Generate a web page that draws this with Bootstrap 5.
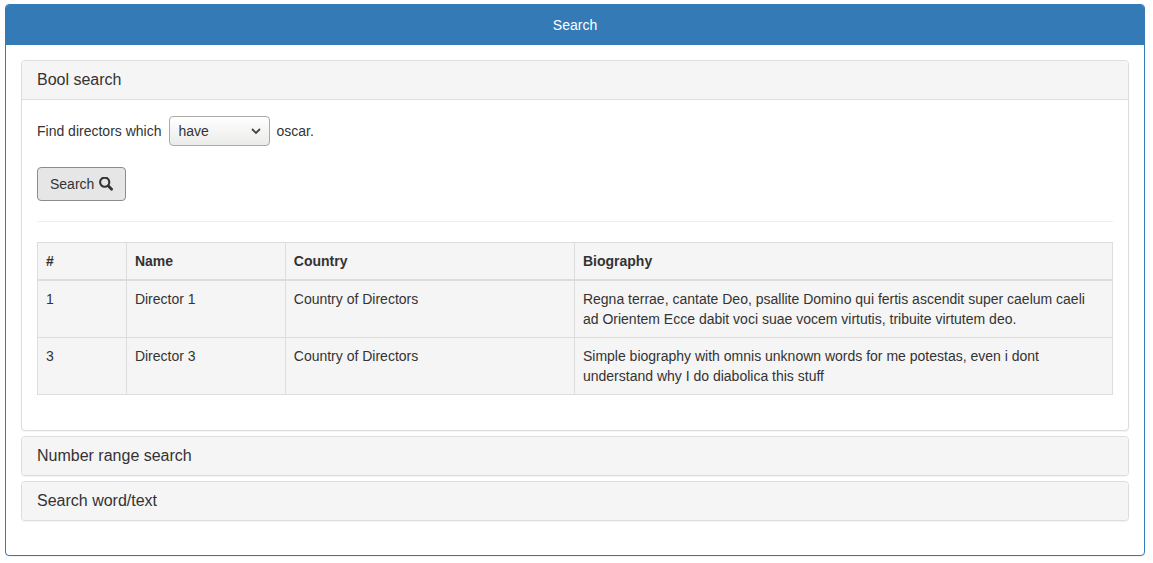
<!DOCTYPE html>
<html lang="en">
<head>
<meta charset="utf-8">
<meta name="viewport" content="width=device-width, initial-scale=1">
<title>Search</title>
<link rel="stylesheet" href="https://cdn.jsdelivr.net/npm/bootstrap@5.3.0/dist/css/bootstrap.min.css">
<style>
  body {
    font-family: "Liberation Sans", Arial, sans-serif;
    font-size: 14px;
    line-height: 20px;
    color: #333;
    background: #fff;
    padding: 4px 8px 4px 5px;
  }
  .search-panel { border-color: #337ab7; border-radius: 4px; box-shadow: 0 1px 1px rgba(0,0,0,.05); color: inherit; }
  .search-panel > .card-header { background: #337ab7; border: 0; color: #fff; padding: 10px 15px; border-radius: 3px 3px 0 0; }
  .search-panel > .card-body { padding: 15px 15px 34px; }
  .search-groups { display: grid; gap: 5px; }
  .search-groups .card { border-color: #ddd; border-radius: 4px; box-shadow: 0 1px 1px rgba(0,0,0,.05); color: inherit; min-width: 0; overflow: hidden; }
  .search-groups .card-header { background: #f5f5f5; border: 0; padding: 10px 15px; }
  .search-groups .card-body { border-top: 1px solid #ddd; padding: 16px 15px 35px; }
  .group-title { font-size: 16px; line-height: 18px; font-weight: 400; }
  .query-line { gap: 5px 7px; margin-bottom: 21px; }
  .choice {
    width: 101px; height: 30px; padding: 0 28px 0 9px;
    font-size: 14px; line-height: 20px; color: #333;
    border: 1px solid #aaa; border-radius: 4px;
    background-color: #f7f7f6;
    background-image: url("data:image/svg+xml,%3Csvg xmlns='http://www.w3.org/2000/svg' viewBox='0 0 10 8'%3E%3Cpath d='M1 2l4 4 4-4' fill='none' stroke='%23444' stroke-width='1.8'/%3E%3C/svg%3E"), linear-gradient(#fff, #ebebea);
    background-repeat: no-repeat;
    background-position: right 8px center, 0 0;
    background-size: 10px 8px, 100% 100%;
  }
  .btn-search { gap: 5px; font-size: 14px; line-height: 20px; padding: 6px 12px; color: #333; background: #e6e6e6; border: 1px solid #8c8c8c; border-radius: 4px; }
  .btn-search:hover { color: #333; background: #d4d4d4; border-color: #8c8c8c; }
  .divider { margin: 20px 0; border-top: 1px solid #eee; opacity: 1; }
  .results { --bs-table-bg: #f5f5f5; --bs-table-color: #333; border-color: #ddd; color: #333; }
  .results > :not(caption) > * > * { padding: 8px; }
  .results > tbody > tr > td:last-child { padding-right: 16px; }
  .results > thead > tr > th { border-bottom-width: 2px; }
  .results .c-id { width: 8.27%; }
  .results .c-name { width: 14.78%; }
  .results .c-country { width: 26.9%; }
</style>
</head>
<body>
<main class="card search-panel">
  <div class="card-header text-center">Search</div>
  <div class="card-body">
    <div class="search-groups" id="searchGroups">
      <section class="card">
        <div class="card-header">
          <h4 class="group-title mb-0"><a class="text-reset text-decoration-none" data-bs-toggle="collapse" href="#boolSearch" aria-expanded="true" aria-controls="boolSearch">Bool search</a></h4>
        </div>
        <div class="collapse show" id="boolSearch" data-bs-parent="#searchGroups">
          <div class="card-body">
            <form>
              <div class="d-flex flex-wrap align-items-center query-line">
                <label for="oscar">Find directors which</label>
                <select class="form-select choice" id="oscar">
                  <option selected>have</option>
                  <option>haven't</option>
                </select>
                <span>oscar.</span>
              </div>
              <button type="button" class="btn btn-search d-inline-flex align-items-center">Search
                <svg width="14" height="14" viewBox="0 0 14 14" aria-hidden="true"><circle cx="5.700" cy="5.200" r="4.600" fill="none" stroke="currentColor" stroke-width="2.100"/><path d="M9.200 8.800L12.600 12.200" stroke="currentColor" stroke-width="2.800" stroke-linecap="round"/></svg>
              </button>
            </form>
            <hr class="divider">
            <div class="table-responsive">
              <table class="table table-bordered results mb-0">
                <thead>
                  <tr><th class="c-id">#</th><th class="c-name">Name</th><th class="c-country">Country</th><th>Biography</th></tr>
                </thead>
                <tbody>
                  <tr><td>1</td><td>Director 1</td><td>Country of Directors</td><td>Regna terrae, cantate Deo, psallite Domino qui fertis ascendit super caelum caeli ad Orientem Ecce dabit voci suae vocem virtutis, tribuite virtutem deo.</td></tr>
                  <tr><td>3</td><td>Director 3</td><td>Country of Directors</td><td>Simple biography with omnis unknown words for me potestas, even i dont understand why I do diabolica this stuff</td></tr>
                </tbody>
              </table>
            </div>
          </div>
        </div>
      </section>
      <section class="card">
        <div class="card-header">
          <h4 class="group-title mb-0"><a class="text-reset text-decoration-none" href="#rangeSearch">Number range search</a></h4>
        </div>
      </section>
      <section class="card">
        <div class="card-header">
          <h4 class="group-title mb-0"><a class="text-reset text-decoration-none" href="#textSearch">Search word/text</a></h4>
        </div>
      </section>
    </div>
  </div>
</main>
<script src="https://cdn.jsdelivr.net/npm/bootstrap@5.3.0/dist/js/bootstrap.bundle.min.js"></script>
</body>
</html>
